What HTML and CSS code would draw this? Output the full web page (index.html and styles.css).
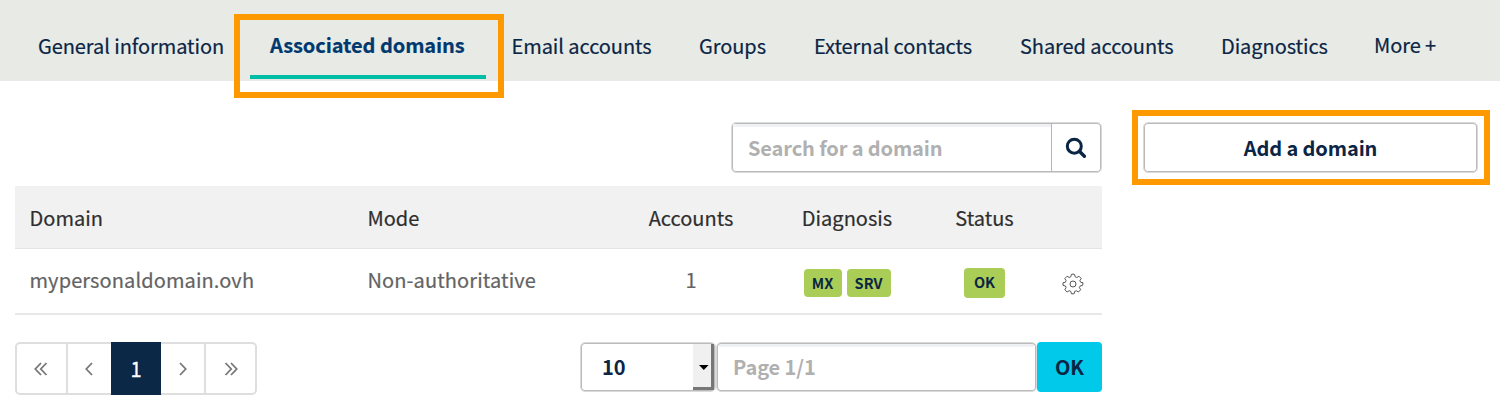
FILE: index.html
```html
<!DOCTYPE html>
<html lang="en">
<head>
<meta charset="utf-8">
<title>Associated domains</title>
<link rel="stylesheet" href="styles.css">
</head>
<body>
<nav class="tabs">
  <a class="tab"><span>General information</span></a>
  <a class="tab tab-active"><span>Associated domains</span></a>
  <a class="tab"><span>Email accounts</span></a>
  <a class="tab"><span>Groups</span></a>
  <a class="tab"><span>External contacts</span></a>
  <a class="tab"><span>Shared accounts</span></a>
  <a class="tab"><span>Diagnostics</span></a>
  <a class="tab tab-more"><span>More +</span></a>
</nav>
<div class="callout callout-tab"></div>
<main class="content">
  <section class="listing">
    <div class="search">
      <div class="search-input">Search for a domain</div>
      <div class="search-button">
        <svg width="22" height="22" viewBox="0 0 22 22"><circle cx="9.3" cy="9.2" r="7" fill="none" stroke="#0b2545" stroke-width="3"/><path d="M14.6 14.5l4.800 4.800" stroke="#0b2545" stroke-width="3.400" stroke-linecap="round"/></svg>
      </div>
    </div>
    <div class="row head">
      <span>Domain</span><span>Mode</span><span class="center">Accounts</span><span class="center">Diagnosis</span><span class="center">Status</span><span></span>
    </div>
    <div class="row body">
      <span>mypersonaldomain.ovh</span><span>Non-authoritative</span><span class="center">1</span>
      <span class="badges"><b class="badge badge-mx">MX</b><b class="badge badge-srv">SRV</b></span>
      <span class="badges"><b class="badge badge-ok">OK</b></span>
      <span class="gear"><svg width="22" height="22" viewBox="0 0 22 22"><circle cx="11" cy="11" r="3"/><path d="M9.400 1.400Q11 .8 12.600 1.400L13.200 3.800l1.600.7 2.100-1.300 2.300 2.300-1.300 2.100.7 1.600 2.400.6Q20.900 11 20.500 12.400l-2.400.6-.7 1.600 1.300 2.100-2.300 2.300-2.100-1.300-1.600.7-.6 2.400H9.400l-.6-2.400-1.600-.7-2.100 1.300-2.300-2.300 1.300-2.100-.7-1.600-2.400-.6V9.800l2.400-.6.7-1.600-1.300-2.100 2.300-2.300 2.100 1.300 1.600-.7z"/></svg></span>
    </div>
    <div class="footer">
      <div class="pager">
        <span class="page"><svg width="14" height="14" viewBox="0 0 14 14"><path d="M7 1L1.300 7 7 13M12.500 1L6.800 7l5.700 6"/></svg></span>
        <span class="page"><svg width="14" height="14" viewBox="0 0 14 14"><path d="M10 1L4.300 7l5.700 6"/></svg></span>
        <span class="page page-current">1</span>
        <span class="page"><svg width="14" height="14" viewBox="0 0 14 14"><path d="M4 1l5.700 6L4 13"/></svg></span>
        <span class="page"><svg width="14" height="14" viewBox="0 0 14 14"><path d="M1.500 1l5.700 6-5.700 6M7 1l5.700 6L7 13"/></svg></span>
      </div>
      <div class="jump">
        <div class="select"><span class="select-value">10</span><span class="select-arrow"><svg width="10" height="5" viewBox="0 0 10 5"><path d="M0 0h9.600L4.800 5z"/></svg></span></div>
        <div class="page-input">Page 1/1</div>
        <div class="ok">OK</div>
      </div>
    </div>
  </section>
  <aside class="actions"><div class="add">Add a domain</div></aside>
</main>
<div class="callout callout-add"></div>
</body>
</html>
```
FILE: styles.css
```css
* { box-sizing: border-box; }
body {
  margin: 0;
  width: 1500px;
  height: 412px;
  overflow: hidden;
  background: #fff;
  color: #0b2545;
  font: 20px/28px "Noto Sans CJK SC", "Open Sans", sans-serif;
  white-space: nowrap;
}
.tabs {
  display: grid;
  grid-template-columns: 212px 261.500px 187.500px 115px 206px 201px 153px 126px;
  height: 81px;
  padding-left: 38px;
  background: #e8ebe5;
  letter-spacing: -.07px;
  -webkit-text-stroke: .2px;
}
.tab { padding-top: 32px; }
.tab-active {
  width: 236px;
  height: 79px;
  padding: 31px 0 0 20px;
  border-bottom: 4px solid #00bda5;
  color: #00396f;
  font-weight: 700;
}
.tab-more { padding-top: 31px; }
.callout { position: absolute; border: 6px solid #ff9900; }
.callout-tab { left: 234px; top: 14px; width: 270px; height: 84px; }
.callout-add { left: 1132px; top: 110px; width: 358px; height: 75px; }
.content { display: flex; gap: 41px; padding: 41px 22px 0 15px; }
.listing { width: 1087px; }
.search, .select, .page-input, .add {
  border: 1px solid #dadada;
  border-radius: 5px;
  box-shadow: inset 0 0 0 1px #bababa;
}
.search { display: flex; width: 371px; height: 51px; margin-left: 716px; }
.search-input { width: 319px; margin: 1px 0 0 0; padding: 10px 0 0 16px; color: #b0b0b0; font-weight: 700; letter-spacing: -.12px; background: linear-gradient(#f0f1f4, #f0f1f4) 1px 0 / 318px 3px no-repeat; }
.search-button { flex: 1; display: flex; padding: 14px 0 0 13px; border-left: 1px solid #b5b5b5; }
.row {
  display: grid;
  grid-template-columns: 338px 266px 115px 197px 78px 77px;
  padding-left: 14.500px;
}
.head { height: 63px; margin-top: 13px; padding-top: 18px; background: #f1f1f1; border-bottom: 1px solid #e4e4e4; color: #2e2e2e; -webkit-text-stroke: .2px; }
.body { height: 66px; padding-top: 17px; border-bottom: 2px solid #e8e8e8; color: #636363; letter-spacing: .1px; -webkit-text-stroke: .2px; }
.center { text-align: center; }
.badges { display: flex; justify-content: center; gap: 5px; letter-spacing: 0; -webkit-text-stroke: 0; }
.badge { height: 28px; margin-top: 3px; border-radius: 4px; background: #a9cd56; color: #0b2545; font-size: 14.500px; text-align: center; }
.badge-mx { width: 38px; }
.badge-srv { width: 44px; }
.badge-ok { width: 41px; height: 30px; margin-top: 2px; }
.gear { padding: 7px 0 0 38px; }
.gear svg { display: block; fill: none; stroke: #555; stroke-width: 1; stroke-linejoin: round; }
.footer { display: flex; justify-content: space-between; padding-top: 27px; }
.pager { display: flex; width: 242px; height: 53px; border: 2px solid #dedede; border-radius: 5px; }
.page { display: flex; align-items: center; justify-content: center; width: 49px; }
.page + .page { border-left: 2px solid #dedede; width: 46px; }
.page svg { fill: none; stroke: #777; stroke-width: 1.800; }
.page + .page-current { width: 50px; margin: -2px 0; border: 0; background: #0c2847; color: #fff; -webkit-text-stroke: .3px; }
.page-current + .page { border: 0; width: 44px; }
.page:last-child { width: 51px; }
.jump { display: flex; height: 50px; font-weight: 700; }
.select { display: flex; justify-content: space-between; width: 136px; padding: 1px; }
.select-value { padding: 9px 0 0 20px; }
.select-arrow { width: 21px; padding: 21px 0 0 6px; background: #f0f0f0; border-right: 3px solid #777; border-bottom: 3px solid #777; }
.select-arrow svg { display: block; }
.page-input { width: 321px; padding: 10px 0 0 16px; color: #b0b0b0; letter-spacing: -.1px; background: linear-gradient(#f0f1f4, #f0f1f4) 2px 1px / 315px 3px no-repeat; }
.ok { width: 65px; padding-top: 11px; border-radius: 4px; background: #00c9e9; text-align: center; }
.add { width: 335px; height: 51px; padding-top: 11px; text-align: center; font-weight: 700; letter-spacing: -.1px; }
```
